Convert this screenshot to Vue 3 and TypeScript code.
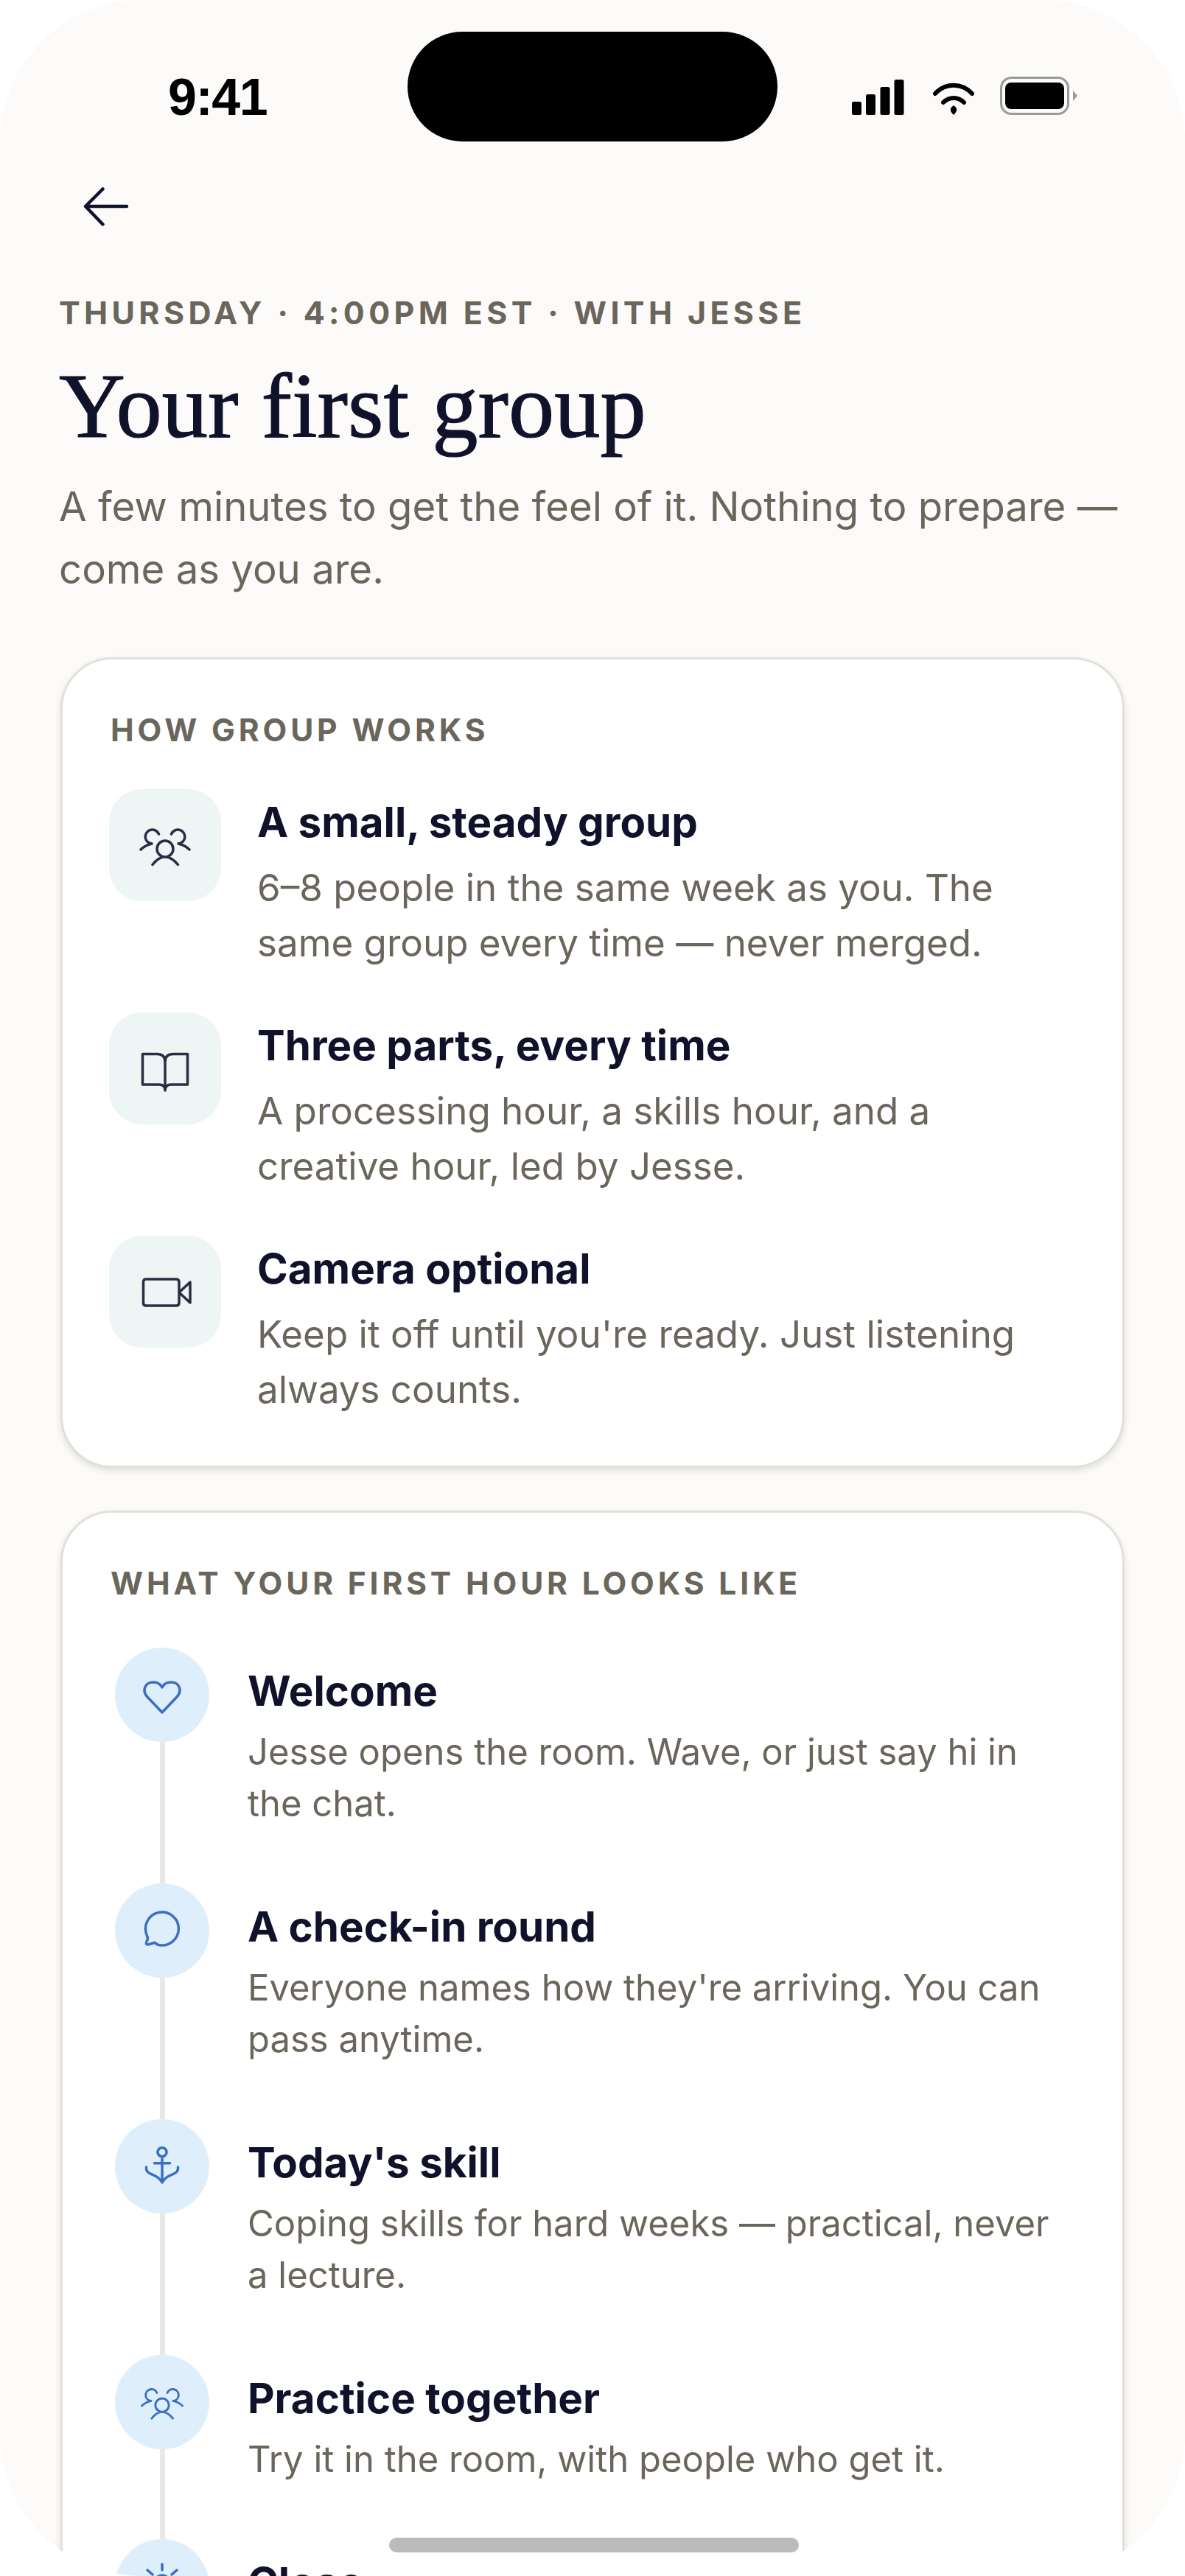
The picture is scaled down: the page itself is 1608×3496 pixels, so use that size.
<script setup lang="ts">
const groupIcon =
  'M36 41m-11 0a11 11 0 1 0 22 0a11 11 0 1 0-22 0M19 62.5Q27 52 36 52Q45 52 53.5 62.5' +
  'M27.5 21A9.5 9.5 0 1 0 18 34M3 42Q9 36 18 34' +
  'M44.5 21A9.5 9.5 0 1 1 54 34M69 42Q63 36 54 34'

const icons: Record<string, string> = {
  group: groupIcon,
  book: 'M36 27Q36 16.5 47 16.5H66.5V58H44Q36 58 36 66Q36 58 28 58H5.5V16.5H25Q36 16.5 36 27V66',
  camera: 'M10 19H51Q55 19 55 23V51Q55 55 51 55H10Q6.5 55 6.5 51V23Q6.5 19 10 19ZM55 37L70 23V51Z',
  heart: 'M36 60L16 39C8 30 13 19 24 19C30 19 34 22 36 26C38 22 42 19 48 19C59 19 64 30 56 39Z',
  chat: 'M31 55.5A22.5 22.5 0 1 0 15.5 43C17 46 17 48 15 51C14 53 14 55.5 17 55C20 54.5 23 53 26 52.5C28 54 29 55 31 55.5Z',
  anchor:
    'M36 10.7a6 6 0 1 0 0.01 0M36 23V58M25.5 31.7H46.5M14.5 37C14 42 17 45 21 46.5C27 49 32 51 36 58C40 51 45 49 51 46.5C55 45 58 42 57.5 37',
  sun: 'M36 6V14M16 14L23 20M56 14L49 20M25 32a11 11 0 1 1 22 0a11 11 0 1 1-22 0',
}

const howItWorks = [
  {
    icon: 'group',
    title: 'A small, steady group',
    text: '6–8 people in the same week as you. The same group every time — never merged.',
  },
  {
    icon: 'book',
    title: 'Three parts, every time',
    text: 'A processing hour, a skills hour, and a creative hour, led by Jesse.',
  },
  {
    icon: 'camera',
    title: 'Camera optional',
    text: "Keep it off until you're ready. Just listening always counts.",
  },
]

const firstHour = [
  { icon: 'heart', title: 'Welcome', text: 'Jesse opens the room. Wave, or just say hi in the chat.' },
  { icon: 'chat', title: 'A check-in round', text: "Everyone names how they're arriving. You can pass anytime." },
  { icon: 'anchor', title: "Today's skill", text: 'Coping skills for hard weeks — practical, never a lecture.' },
  { icon: 'group', title: 'Practice together', text: 'Try it in the room, with people who get it.' },
  { icon: 'sun', title: 'Close', text: '' },
]
</script>

<template>
  <div class="phone">
    <div class="status">
      <span class="time">9:41</span>
      <svg class="status-icons" width="306" height="52" viewBox="0 0 306 52">
        <rect x="0" y="34" width="13" height="18" rx="2.5" />
        <rect x="19" y="24" width="13" height="28" rx="2.5" />
        <rect x="38.5" y="14" width="13" height="38" rx="2.5" />
        <rect x="57.5" y="4" width="13" height="48" rx="2.5" />
        <path d="M113 23C127 8 149 8 163 23" fill="none" stroke="#000" stroke-width="6" stroke-linecap="round" />
        <path d="M124 35C132 27 144 27 152 35" fill="none" stroke="#000" stroke-width="6" stroke-linecap="round" />
        <path d="M138 39C142 42 145 45 138 52C131 45 134 42 138 39Z" />
        <rect x="202.5" y="1.5" width="91" height="49" rx="14" fill="none" stroke="#9a9a98" stroke-width="3" />
        <rect x="208" y="8" width="80" height="36" rx="8" />
        <path d="M300 19L306 26L300 33Z" fill="#9a9a98" />
      </svg>
    </div>
    <div class="island"></div>

    <button class="back" type="button" aria-label="Back">
      <svg width="72" height="72" viewBox="0 0 72 72">
        <path d="M64 36H9M31.5 12.5L8 36L31.5 60.5" fill="none" stroke="#10112a" stroke-width="4.5" stroke-linecap="round" stroke-linejoin="round" />
      </svg>
    </button>

    <header class="intro">
      <p class="eyebrow">THURSDAY · 4:00PM EST · WITH JESSE</p>
      <h1>Your first group</h1>
      <p class="lede">A few minutes to get the feel of it. Nothing to prepare — come as you are.</p>
    </header>

    <section class="card">
      <h2>HOW GROUP WORKS</h2>
      <div class="rows">
        <div class="row" v-for="item in howItWorks" :key="item.title">
          <div class="tile">
            <svg class="glyph" width="72" height="72" viewBox="0 0 72 72"><path :d="icons[item.icon]" /></svg>
          </div>
          <div class="copy">
            <h3>{{ item.title }}</h3>
            <p>{{ item.text }}</p>
          </div>
        </div>
      </div>
    </section>

    <section class="card second">
      <h2>WHAT YOUR FIRST HOUR LOOKS LIKE</h2>
      <div class="timeline">
        <div class="step" v-for="step in firstHour" :key="step.title">
          <div class="rail">
            <div class="dot">
              <svg class="glyph" :width="step.icon === 'group' ? 60 : 72" :height="step.icon === 'group' ? 60 : 72" viewBox="0 0 72 72"><path :d="icons[step.icon]" /></svg>
            </div>
            <div class="line"></div>
          </div>
          <div class="step-copy">
            <h3>{{ step.title }}</h3>
            <p v-if="step.text">{{ step.text }}</p>
          </div>
        </div>
      </div>
    </section>

    <div class="home"></div>
  </div>
</template>

<style scoped>
.phone {
  position: relative;
  width: 1608px;
  height: 3496px;
  overflow: hidden;
  border-radius: 193px;
  background: #fcfbf9;
  font-family: Inter, "Liberation Sans", sans-serif;
  color: #6b665c;
}

.status {
  display: flex;
  justify-content: space-between;
  align-items: flex-start;
  box-sizing: border-box;
  height: 244px;
  padding: 104px 146px 0 228px;
}

.time {
  font-family: "Liberation Sans", Arial, sans-serif;
  font-weight: 700;
  font-size: 70px;
  line-height: 56px;
  letter-spacing: -1.5px;
  color: #000;
}

.status-icons {
  display: block;
}

.island {
  position: absolute;
  top: 43px;
  left: 553px;
  width: 502px;
  height: 149px;
  border-radius: 75px;
  background: #000;
}

.back {
  display: block;
  margin: 0 0 0 108px;
  padding: 0;
  height: 72px;
  border: 0;
  background: none;
}

.back svg {
  display: block;
}

.intro {
  margin: 78px 82px 0 80px;
}

.eyebrow {
  margin: 0;
  font-size: 43px;
  font-weight: 700;
  line-height: 60px;
  letter-spacing: 5.35px;
}

h1 {
  margin: 27px 0 0;
  font-family: "Liberation Serif", "Times New Roman", serif;
  font-size: 124.5px;
  font-weight: 400;
  line-height: 140px;
  color: #10112a;
  -webkit-text-stroke: 1.2px #10112a;
}

.lede {
  margin: 24px 0 0;
  font-size: 54.5px;
  line-height: 85px;
}

.card {
  box-sizing: border-box;
  margin: 77px 82px 0;
  padding: 71px 63px 66px;
  border: 3px solid #e2e0da;
  border-radius: 70px;
  background: #fff;
  box-shadow: 0 4px 8px rgba(60, 55, 40, 0.14);
}

.card.second {
  margin-top: 58px;
}

h2 {
  margin: 0 0 0 2px;
  font-size: 42.5px;
  font-weight: 700;
  line-height: 50px;
  letter-spacing: 4.85px;
}

.rows {
  display: flex;
  flex-direction: column;
  gap: 57px;
  margin-top: 55px;
}

.row {
  display: flex;
  gap: 49px;
}

.tile {
  display: flex;
  flex: none;
  align-items: center;
  justify-content: center;
  width: 152px;
  height: 152px;
  border-radius: 45px;
  background: #edf6f5;
}

.glyph {
  display: block;
  fill: none;
  stroke: #2a2e45;
  stroke-width: 3.5;
  stroke-linecap: round;
  stroke-linejoin: round;
}

.copy {
  padding-top: 9px;
}

h3 {
  margin: 0;
  font-size: 56.5px;
  font-weight: 700;
  line-height: 72px;
  color: #10112a;
}

.copy p {
  margin: 15px 0 0;
  font-size: 51.1px;
  line-height: 75px;
}

.timeline {
  margin-top: 62px;
  padding-left: 8px;
}

.step {
  display: flex;
  gap: 52px;
}

.rail {
  display: flex;
  flex: none;
  flex-direction: column;
  align-items: center;
  width: 128px;
}

.dot {
  display: flex;
  flex: none;
  align-items: center;
  justify-content: center;
  width: 128px;
  height: 128px;
  border-radius: 50%;
  background: #deeffb;
}

.dot .glyph {
  stroke: #3a6fc4;
}

.line {
  flex: 1;
  width: 7px;
  background: #e9e8e4;
}

.step-copy {
  padding: 26px 0 73px;
}

.step-copy h3 {
  line-height: 66px;
}

.step-copy p {
  margin: 15px 0 0;
  font-size: 49px;
  line-height: 70px;
}

.home {
  position: absolute;
  left: 528px;
  bottom: 32px;
  width: 556px;
  height: 20px;
  border-radius: 10px;
  background: #bbb;
}
</style>

<style>
html,
body {
  background: #fff;
}
</style>
